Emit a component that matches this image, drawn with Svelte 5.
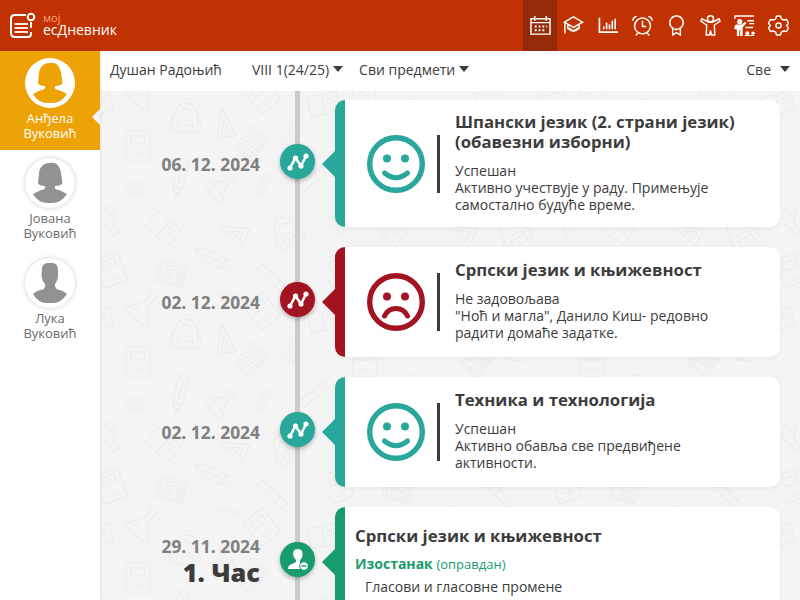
<script>
  const students = [
    { first: 'Анђела', last: 'Вуковић', girl: true, active: true },
    { first: 'Јована', last: 'Вуковић', girl: true },
    { first: 'Лука', last: 'Вуковић', girl: false }
  ];
  const entries = [
    { date: '06. 12. 2024', color: '#29a79b', height: 127, dot: 44, happy: true, title: ['Шпански језик (2. страни језик)', '(обавезни изборни)'], lines: ['Успешан', 'Активно учествује у раду. Примењује', 'самостално будуће време.'] },
    { date: '02. 12. 2024', color: '#a31423', height: 110, dot: 35, happy: false, title: ['Српски језик и књижевност'], lines: ['Не задовољава', '"Ноћ и магла", Данило Киш- редовно', 'радити домаће задатке.'] },
    { date: '02. 12. 2024', color: '#29a79b', height: 110, dot: 35, happy: true, title: ['Техника и технологија'], lines: ['Успешан', 'Активно обавља све предвиђене', 'активности.'] }
  ];
</script>

{#snippet calculator()}
  <rect x="-14" y="-11" width="28" height="22" rx="2" />
  <path d="M-11-8H-5V8H-11zM-2-8H3V-4H-2zM6-8H11V-4H6zM-2-1H3V3H-2zM6-1H11V3H6zM-2 6H3V9H-2zM6 6H11V9H6z" />
{/snippet}
{#snippet backpack()}
  <path d="M-12 14C-14 0-13-14-1-15C11-16 14 0 12 14ZM-4-15C-5-21 4-21 3-15M-12 1Q-17 2-15 12L-12 13M12 1Q17 2 15 12L12 13M-8 14V5Q-8 2 0 2T8 5V14M-8 7H8M-6-6Q0-12 6-6" />
{/snippet}
{#snippet flask()}
  <path d="M-4-16H4L5-13H3V-4L14 12Q13 16 8 15H-8Q-13 16-14 12L-3-4V-13H-5ZM-10 7H10" />
{/snippet}
{#snippet pencil()}
  <path d="M-3-18H3Q5-18 5-15V11L0 20L-5 11V-15Q-5-18-3-18ZM-5-13H5M-5 11H5M0-13V11M-2 16H2" />
{/snippet}
{#snippet notebook()}
  <path d="M-12-15H12V15H-12ZM-7-10H7V-2H-7zM-6 7H6M-4 10H4" />
{/snippet}
{#snippet openBook()}
  <path d="M0-9Q-7-13-15-10V9Q-7 6 0 11Q7 6 15 9V-10Q7-13 0-9V11M4-4L12-6M4 0L12-2" />
{/snippet}
{#snippet triangle()}
  <path d="M-9 14L0-15L10 14ZM-4 9L0-3L4 9Z" />
{/snippet}
{#snippet ruler()}
  <path d="M-17-4H17V4H-17ZM-12-4V0M-7-4V-1M-2-4V0M3-4V-1M8-4V0M13-4V-1" />
{/snippet}

<div class="app">
  <header>
    <svg class="logo" viewBox="0 0 28 28">
      <path d="M17 4H6Q2 4 2 8V22Q2 26 6 26H19Q22 26 22 23V21M22 17V11" fill="none" stroke="#fff" stroke-width="2" />
      <circle cx="22" cy="6" r="3.3" fill="none" stroke="#fff" stroke-width="2" />
      <path d="M5.5 13H19M5.5 17H19M5.5 21H19" stroke="#ffe8df" stroke-width="1.8" />
    </svg>
    <div class="brand"><small>мој</small><span>есДневник</span></div>
    <nav>
      <div class="tool selected"><svg viewBox="0 0 22 22"><path d="M1 4H21V20H1ZM1 8H21M5 1V6M17 1V6" /><path d="M5 12H7M9 12H11M13 12H15M17 12H18M5 16H7M9 16H11M13 16H15" stroke-width="2" /></svg></div>
      <div class="tool grad"><svg viewBox="0 0 22 22"><path d="M1.5 7.5L11 2L20.5 7.5L11 13ZM5 10V14Q11 20 17 14V10M5 13L11 16.5L17 13M2 8V19.5" /></svg></div>
      <div class="tool"><svg viewBox="0 0 22 22"><path d="M1.5 3V18H21M6 15V12M9 15V8M12 15V10M15 15V6M18 15V4" stroke-width="1.7" /></svg></div>
      <div class="tool"><svg viewBox="0 0 22 22"><circle cx="11" cy="11.5" r="8.3" /><path d="M11 6V12H15M1 6Q1 2 5 1.5M17 1.5Q21 2 21 6M6 19L4 21.5M16 19L18 21.5" /></svg></div>
      <div class="tool"><svg viewBox="0 0 22 22"><circle cx="11" cy="8" r="7" stroke-dasharray="4 .4" stroke-width="1.8" /><path d="M7 14V21L11 18.5L15 21V14" /></svg></div>
      <div class="tool"><svg viewBox="0 0 22 22"><circle cx="11" cy="4" r="3.2" /><path d="M9 7.5L2 4L1 6.5L7 10.5L6.5 21H10L11 16L12 21H15.5L15 10.5L21 6.5L20 4L13 7.5Z" /></svg></div>
      <div class="tool"><svg viewBox="0 0 22 22"><path d="M1 4V1H21M14 6H21M16 9H21M12 13H20" /><g fill="#fff" stroke="none"><circle cx="6" cy="7" r="2.7" /><path d="M2 10H8L12 7L13 8.5L9 13V22H6.5V16H5.5V22H3V15H0.500V12Z" /><circle cx="14" cy="19" r="2" /><circle cx="20" cy="19" r="1.8" /><path d="M11 21H21V22H11Z" /></g></svg></div>
      <div class="tool"><svg viewBox="0 0 22 22"><path d="M9 1H13L14 4L16.500 5.300L19.500 4.700L21.500 8.500L19.500 11L21.500 13.500L19.500 17.300L16.500 16.700L14 18L13 21H9L8 18L5.500 16.700L2.500 17.300L.5 13.500L2.500 11L.5 8.500L2.500 4.700L5.500 5.300L8 4Z" stroke-linejoin="round" /><circle cx="11" cy="11" r="2.7" /></svg></div>
    </nav>
  </header>

  <div class="body">
    <aside>
      {#each students as s}
        <div class="student" class:active={s.active}>
          <div class="avatar">
            <svg viewBox="0 0 50 50">
              {#if s.girl}
                <path d="M25 5C32 4 35 9 36 15L37.500 25Q36 28 30 28Q29 32 34 32L42 36Q36 45 27 45H23Q13 45 8 36L16 32Q21 32 20 28Q14 28 13 25L14 15C15 8 19 5 25 5Z" />
              {:else}
                <path d="M22 5H28Q33 6 33 12V19Q32 24 30 26V28Q31 32 35 32Q39 33 42 36Q36 45 28 45H22Q13 45 8 36Q11 33 15 32Q20 32 20 28V26Q17 23 16.500 18L17 11Q17 6 22 5Z" />
              {/if}
            </svg>
          </div>
          <p>{s.first}<br />{s.last}</p>
        </div>
      {/each}
    </aside>

    <main>
      <div class="filters">
        <span class="teacher">Душан Радоњић</span>
        <span class="drop grade">VIII 1(24/25)<i></i></span>
        <span class="drop subject">Сви предмети<i></i></span>
        <span class="drop all">Све<i></i></span>
      </div>
      <section class="timeline">
        <svg class="doodles" width="700" height="509">
          <defs>
            <pattern id="school" width="227" height="216" patternUnits="userSpaceOnUse">
              <g fill="none" stroke="#ebebeb" stroke-width="1.1">
                <g transform="translate(86 27) rotate(8)">{@render backpack()}</g>
                <g transform="translate(38 55)">{@render notebook()}</g>
                <g transform="translate(124 32) rotate(-8)">{@render triangle()}</g>
                <g transform="translate(151 53) rotate(-50)">{@render calculator()}</g>
                <g transform="translate(80 86) rotate(13)">{@render pencil()}</g>
                <g transform="translate(35 98) scale(.6)">{@render calculator()}</g>
                <g transform="translate(122 95) rotate(50) scale(.9)">{@render flask()}</g>
                <g transform="translate(163 95) rotate(24) scale(.7)">{@render pencil()}</g>
                <g transform="translate(9 131) rotate(150) scale(.9)">{@render flask()}</g>
                <g transform="translate(63 138) rotate(40)">{@render openBook()}</g>
                <g transform="translate(133 141) rotate(-65)">{@render triangle()}</g>
                <g transform="translate(187 141) rotate(-30)">{@render backpack()}</g>
                <g transform="translate(112 167) rotate(116)">{@render pencil()}</g>
                <g transform="translate(71 183) rotate(14)">{@render calculator()}</g>
                <g transform="translate(11 179) rotate(-20)">{@render notebook()}</g>
                <g transform="translate(172 187) rotate(44)">{@render ruler()}</g>
                <g transform="translate(127 204) rotate(100) scale(.6)">{@render pencil()}</g>
                <g transform="translate(44 0) rotate(38)">{@render flask()}</g>
                <g transform="translate(44 216) rotate(38)">{@render flask()}</g>
                <g transform="translate(162 4) rotate(-38)">{@render notebook()}</g>
                <g transform="translate(162 220) rotate(-38)">{@render notebook()}</g>
                <g transform="translate(224 14) rotate(-14)">{@render openBook()}</g>
                <g transform="translate(190 43) rotate(8) scale(.75)">{@render triangle()}</g>
                <g transform="translate(214 87) rotate(-38)">{@render ruler()}</g>
                <g transform="translate(-3 14) rotate(-14)">{@render openBook()}</g>
              </g>
            </pattern>
          </defs>
          <rect width="700" height="509" fill="url(#school)" />
        </svg>
        <div class="rail"></div>

        {#each entries as e}
          <article style:height="{e.height}px" style:--accent={e.color}>
            <div class="when">{e.date}</div>
            <div class="dot" style:margin-top="{e.dot}px">
              <svg viewBox="0 0 35 35"><path d="M10 24L15.500 14L21 22L26 12" fill="none" stroke="#fff" stroke-width="2.5" /><g fill="#fff"><circle cx="10" cy="24" r="2.6" /><circle cx="15.500" cy="14" r="2.6" /><circle cx="21" cy="22" r="2.6" /><circle cx="26" cy="12" r="2.6" /></g></svg>
            </div>
            <div class="card">
              <svg class="face" viewBox="0 0 58 58">
                <circle cx="29" cy="29" r="26.300" fill="none" stroke="currentColor" stroke-width="5.400" />
                <circle cx="20" cy="23.500" r="4" fill="currentColor" /><circle cx="38" cy="23.500" r="4" fill="currentColor" />
                <path d={e.happy ? 'M17.5 38Q29 47.5 40.5 38' : 'M17.5 43Q21 35.5 29 35.5Q37 35.5 40.5 43'} fill="none" stroke="currentColor" stroke-width="5" stroke-linecap="round" />
              </svg>
              <div class="bar"></div>
              <div class="info">
                <h2>{#each e.title as t}<div>{t}</div>{/each}</h2>
                {#each e.lines as line}<p>{line}</p>{/each}
              </div>
            </div>
          </article>
        {/each}

        <article class="absence" style:--accent="#179c6c">
          <div class="when"><div>29. 11. 2024</div><strong>1. Час</strong></div>
          <div class="dot" style:margin-top="35px">
            <svg viewBox="0 0 35 35"><path d="M18 7Q23 7 22.500 13Q22 17 20 18V21L26 23Q28 25 28 27H8Q8 23 12 22L16 20V18Q13 15 13 12Q13 7 18 7Z" fill="#fff" /><circle cx="24" cy="24" r="4.300" fill="#fff" stroke="#179c6c" /><path d="M21.500 24H26.500" stroke="#179c6c" stroke-width="1.4" /></svg>
          </div>
          <div class="card lesson">
            <h2>Српски језик и књижевност</h2>
            <div class="status"><b>Изостанак</b> <span>(оправдан)</span></div>
            <p>Гласови и гласовне промене</p>
          </div>
        </article>
      </section>
    </main>
  </div>
</div>

<style>
  :global(body) { margin: 0; overflow: hidden; }
  * { box-sizing: border-box; }
  .app { width: 800px; height: 600px; overflow: hidden; display: flex; flex-direction: column; font-family: "Open Sans", "Noto Sans", sans-serif; color: #3c3c3c; font-size: 14px; }
  header { height: 51px; flex: none; background: #c03202; display: flex; align-items: center; padding-left: 9px; color: #fff; }
  .logo { width: 28px; height: 28px; margin-top: -2px; }
  .brand { display: flex; flex-direction: column; margin-left: 6px; padding-bottom: 3px; }
  .brand small { font-size: 11px; line-height: 11px; color: #ffa184; }
  .brand span { font-size: 14px; line-height: 14px; }
  nav { margin-left: auto; display: flex; height: 100%; }
  .tool { width: 34px; height: 51px; display: flex; align-items: center; justify-content: center; }
  .tool:last-child { width: 39px; padding-right: 5px; }
  .tool.selected { background: #942c0b; }
  .tool.grad { padding-right: 2px; }
  .tool svg { width: 21px; height: 21px; fill: none; stroke: #fff; stroke-width: 1.5; }
  .body { flex: 1; display: flex; min-height: 0; }
  aside { width: 100px; flex: none; background: #fff; box-shadow: 0 0 3px #0002; z-index: 2; }
  .student { height: 100px; padding-top: 8px; text-align: center; color: #6c6c6c; position: relative; }
  .student.active { background: #eda206; color: #fff; height: 99px; padding-top: 7px; }
  .student.active::after { content: ""; position: absolute; right: 0; top: 58px; border: 8px solid transparent; border-right: 8px solid #f4f4f4; border-left: 0; }
  .avatar { width: 50px; height: 50px; margin: 0 auto; border-radius: 50%; background: #fff; box-shadow: 0 0 5px #0003; }
  .active .avatar { box-shadow: none; }
  .avatar svg { display: block; fill: #929292; }
  .active .avatar svg { fill: #eda206; }
  .student p { margin: 3px 0 0; font-size: 13px; line-height: 15px; }
  main { flex: 1; display: flex; flex-direction: column; min-width: 0; }
  .filters { height: 40px; flex: none; background: #fff; display: flex; align-items: center; padding: 0 10px 4px; }
  .grade { margin-left: 30px; }
  .subject { margin-left: 16px; }
  .all { margin-left: auto; }
  .drop { display: flex; align-items: center; gap: 4px; }
  .drop.all { gap: 9px; }
  .drop i { border: 5.5px solid transparent; border-top: 6px solid #3c3c3c; border-bottom: 0; }
  .timeline { flex: 1; min-height: 0; overflow: hidden; position: relative; background: #f4f4f4; padding: 9px 20px 0 0; display: flex; flex-direction: column; gap: 20px; }
  .doodles { position: absolute; left: 0; top: 0; }
  .rail { position: absolute; left: 195px; top: 0; width: 5px; height: 509px; background: #cbcbcb; }
  article { flex: none; position: relative; display: flex; }
  .when { width: 160px; align-self: center; text-align: right; color: #808080; font-weight: 700; font-size: 17.4px; line-height: 22px; }
  .when strong { display: block; color: #3c3c3c; font-size: 25.3px; line-height: 30px; }
  .dot { width: 35px; height: 35px; margin-left: 20px; flex: none; border-radius: 50%; background: var(--accent); box-shadow: 0 2px 4px #0004; }
  .dot svg { display: block; }
  .card { margin-left: 20px; width: 445px; position: relative; background: #fff; border-left: 10px solid var(--accent); border-radius: 10px; display: flex; align-items: center; box-shadow: 0 2px 4px #0000000d; }
  .card::before { content: ""; position: absolute; left: -23px; top: calc(50% - 13px); border: 13px solid transparent; border-left: 0; border-right: 13px solid var(--accent); }
  .face { width: 58px; height: 58px; margin-left: 22px; color: var(--accent); }
  .bar { width: 3px; height: 58px; background: #3c3c3c; margin-left: 12px; }
  .info { margin: 0 0 3px 15px; white-space: nowrap; }
  h2 { margin: 0 0 10px; font-size: 16.75px; line-height: 20px; white-space: nowrap; }
  .info p { margin: 0; line-height: 17px; }
  .absence { height: 150px; }
  .absence .when { align-self: flex-start; padding-top: 28px; }
  .lesson { display: block; padding: 19px 10px; }
  .lesson::before { top: 42px; }
  .lesson h2 { margin-bottom: 8px; }
  .status { color: #179c6c; line-height: 20px; }
  .status span { font-size: 13px; }
  .lesson p { margin: 3px 10px; line-height: 20px; }
</style>
